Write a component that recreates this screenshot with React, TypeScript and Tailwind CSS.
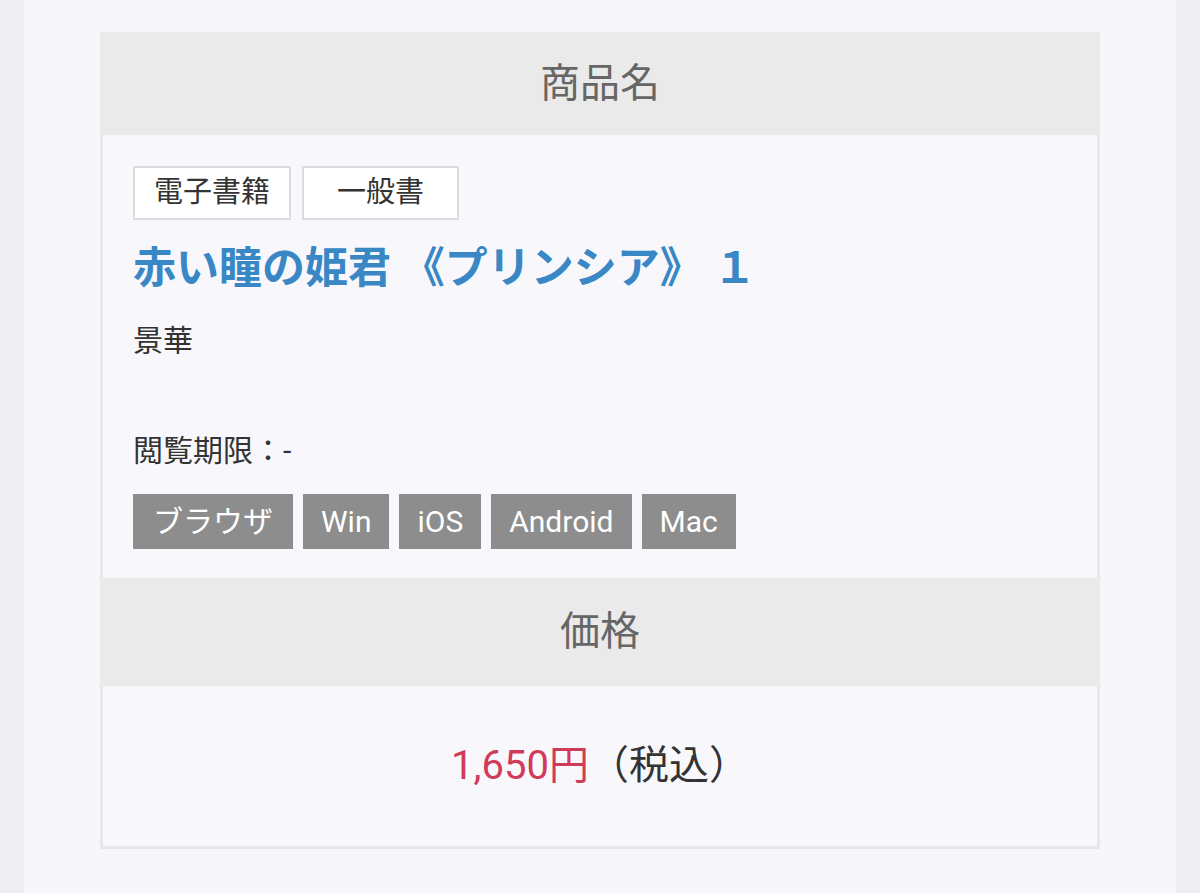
import React from "react"

const platforms = ["ブラウザ", "Win", "iOS", "Android", "Mac"]

// 商品詳細カード（商品名・対応端末・価格）
const App: React.FC = () => {
  return (
    <div className="h-[893px] w-full bg-[#eeeef3] font-[Roboto,'Noto_Sans_CJK_JP',sans-serif] text-[#333]">
      <div className="mx-[24px] h-full bg-[#f7f7fb] px-[76px] pt-[32px]">
        <div className="w-[1000px]">
          {/* 商品名 */}
          <div className="flex h-[103px] items-center justify-center bg-[#eaeaea] text-[40px] text-[#666]">
            商品名
          </div>
          <div className="border-x-[3px] border-[#e8e8ec] bg-[#f8f8fc] pl-[30px] pt-[31px] pb-[29px]">
            <div className="flex gap-[11px]">
              <span className="flex h-[54px] w-[158px] items-center justify-center border-2 border-[#dcdcdc] bg-white text-[29px]">
                電子書籍
              </span>
              <span className="flex h-[54px] w-[157px] items-center justify-center border-2 border-[#dcdcdc] bg-white text-[29px]">
                一般書
              </span>
            </div>
            <h2 className="mt-[20px] text-[43px] font-bold leading-[56px] text-[#3a87c6]">
              赤い瞳の姫君 《プリンシア》 １
            </h2>
            <p className="mt-[25px] text-[30px] leading-[40px]">景華</p>
            <p className="mt-[70px] text-[30px] leading-[40px]">閲覧期限：-</p>
            <div className="mt-[23px] flex gap-[10px]">
              {platforms.map((p, i) => (
                <span
                  key={p}
                  className={`flex h-[55px] items-center bg-[#8d8d8d] text-[30px] text-white ${
                    i === 0 ? "px-[20px]" : "px-[18px]"
                  }`}
                >
                  {p}
                </span>
              ))}
            </div>
          </div>

          {/* 価格 */}
          <div className="flex h-[108px] items-center justify-center bg-[#eaeaea] text-[40px] text-[#666]">
            価格
          </div>
          <div className="flex h-[163px] items-center justify-center border-x-[3px] border-b-[3px] border-[#e8e8ec] bg-[#f8f8fc] text-[40px]">
            <span className="text-[#d13a58]">1,650円</span>
            <span>（税込）</span>
          </div>
        </div>
      </div>
    </div>
  )
}

export default App
